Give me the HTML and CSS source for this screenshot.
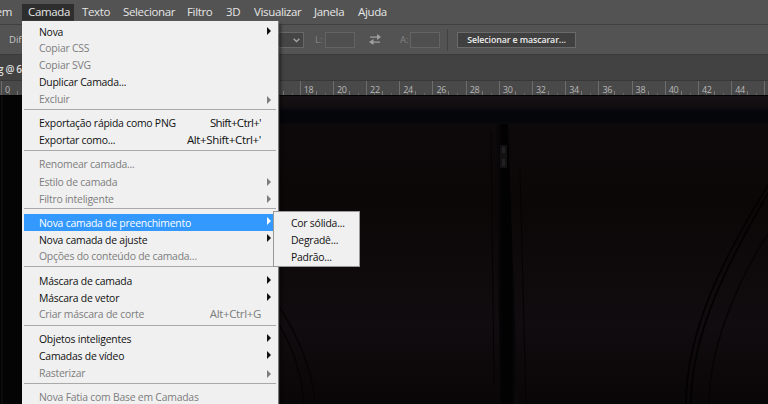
FILE: index.html
```html
<!DOCTYPE html>
<html lang="pt-BR">
<head>
<meta charset="utf-8">
<title>Editor de imagens</title>
<link rel="stylesheet" href="styles.css">
</head>
<body>
<div class="app">
  <nav class="menubar">
    <span class="m-cut">em</span><span class="active">Camada</span><span class="m-texto">Texto</span><span class="m-sel">Selecionar</span><span class="m-filtro">Filtro</span><span class="m-3d">3D</span><span class="m-vis">Visualizar</span><span class="m-jan">Janela</span><span class="m-aj">Ajuda</span>
  </nav>
  <div class="options">
    <span class="opt-label">Dif</span>
    <span class="select"><svg width="7" height="5" viewBox="0 0 7 5"><path d="M.7.8 3.5 3.6 6.3.8" fill="none" stroke="#aaa" stroke-width="1.3"/></svg></span>
    <span class="dim">L:</span><span class="field"></span>
    <svg class="swap" width="12" height="12" viewBox="0 0 12 12"><path d="M1 2.5h7V0l4 3-4 3V3.8H1zM11 7.5H4.5V5L0 8l4.5 3V8.8H11z" fill="#a0a0a0"/></svg>
    <span class="dim">A:</span><span class="field"></span>
    <span class="divider"></span>
    <button>Selecionar e mascarar...</button>
  </div>
  <div class="tabs">g @ 6</div>
  <div class="ruler">
    <span>0</span><span></span><span></span><span></span><span></span><span></span><span></span><span></span><span></span><span>18</span><span>20</span><span>22</span><span>24</span><span>26</span><span>28</span><span>30</span><span>32</span><span>34</span><span>36</span><span>38</span><span>40</span><span>42</span><span>44</span><span></span>
  </div>
  <svg class="canvas" width="768" height="309" viewBox="0 0 768 309">
    <defs>
      <linearGradient id="door" x1="0" y1="0" x2="0" y2="1"><stop offset="0" stop-color="#0e0a0c"/><stop offset=".35" stop-color="#0b0707"/><stop offset=".75" stop-color="#110c0f"/><stop offset="1" stop-color="#090607"/></linearGradient>
      <linearGradient id="rail" x1="0" y1="0" x2="0" y2="1"><stop offset="0" stop-color="#171214"/><stop offset=".4" stop-color="#100d10"/><stop offset=".55" stop-color="#04060a"/><stop offset=".9" stop-color="#05060a"/><stop offset="1" stop-color="#0e0a0c"/></linearGradient>
      <linearGradient id="post"><stop offset="0" stop-color="#0c090b"/><stop offset=".3" stop-color="#020203"/><stop offset=".7" stop-color="#020203"/><stop offset="1" stop-color="#0e0b0d"/></linearGradient>
    </defs>
    <path d="M0 0h768v309H0z" fill="url(#door)"/>
    <path d="M0 0h768v30H0z" fill="url(#rail)"/>
    <path d="M0 0h22v309H0z" fill="#050404"/>
    <path d="M2 0v309" stroke="#171415"/>
    <path d="M496 29h12l10 280h-18z" fill="url(#post)"/>
    <path d="M491 35l3 255M520 75l6 234" fill="none" stroke="#050304"/>
    <path d="M500 50h7v23h-7z" fill="#131213"/><path d="M502 52h3v6h-3zM502 64h3v7h-3z" fill="#222022"/>
    <path d="M768 90C725 160 686 235 686 309M768 98C730 164 691 237 691 309" fill="none" stroke="#030203" stroke-width="1.7"/>
    <path d="M768 139C735 190 709 255 709 309" fill="none" stroke="#060405" stroke-width="1.5"/>
    <path d="M278 210c20 30 34 65 37 99M278 228c16 26 24 52 26 81" fill="none" stroke="#060405" stroke-width="1.5"/>
    <path d="M0 .5h768" stroke="#000"/>
  </svg>

  <div class="menu">
    <div class="item short sub"><span class="label">Nova</span></div>
    <div class="item off"><span class="label">Copiar CSS</span></div>
    <div class="item off"><span class="label">Copiar SVG</span></div>
    <div class="item"><span class="label">Duplicar Camada...</span></div>
    <div class="item off sub"><span class="label">Excluir</span></div>
    <div class="sep s7"></div>
    <div class="item"><span class="label">Exportação rápida como PNG</span><span class="key tight">Shift+Ctrl+'</span></div>
    <div class="item short"><span class="label">Exportar como...</span><span class="key">Alt+Shift+Ctrl+'</span></div>
    <div class="sep s8"></div>
    <div class="item off"><span class="label">Renomear camada...</span></div>
    <div class="item off sub low"><span class="label">Estilo de camada</span></div>
    <div class="item off sub low"><span class="label">Filtro inteligente</span></div>
    <div class="sep s7"></div>
    <div class="item hot sub low"><span class="label">Nova camada de preenchimento</span></div>
    <div class="item sub low"><span class="label">Nova camada de ajuste</span></div>
    <div class="item short off"><span class="label">Opções do conteúdo de camada...</span></div>
    <div class="sep s9"></div>
    <div class="item sub"><span class="label">Máscara de camada</span></div>
    <div class="item short sub"><span class="label">Máscara de vetor</span></div>
    <div class="item off"><span class="label">Criar máscara de corte</span><span class="key">Alt+Ctrl+G</span></div>
    <div class="sep s8"></div>
    <div class="item sub"><span class="label">Objetos inteligentes</span></div>
    <div class="item sub"><span class="label">Camadas de vídeo</span></div>
    <div class="item off sub"><span class="label">Rasterizar</span></div>
    <div class="sep s7"></div>
    <div class="item off"><span class="label">Nova Fatia com Base em Camadas</span></div>
  </div>
  <div class="submenu">
    <div class="label">Cor sólida...</div>
    <div class="label">Degradê...</div>
    <div class="label">Padrão...</div>
  </div>
</div>
</body>
</html>
```
FILE: styles.css
```css
* { box-sizing: border-box; }
body { margin: 0; background: #000; }
.app {
  position: relative;
  width: 768px;
  height: 404px;
  overflow: hidden;
  font: 11.5px/17px "Open Sans", "Noto Sans", sans-serif;
  letter-spacing: -0.35px;
  white-space: nowrap;
}
.menubar {
  display: flex;
  height: 25px;
  background: #535353;
  border-bottom: 1px solid #404040;
  color: #e6e6e6;
  padding-top: 4px;
  line-height: 16px;
}
.m-cut { width: 22px; padding-right: 10px; display: flex; justify-content: flex-end; }
.active { width: 52px; padding-left: 6px; background: #2e2e2e; }
.m-texto { width: 49px; padding-left: 8px; }
.m-sel { width: 64px; }
.m-filtro { width: 39px; }
.m-3d { width: 28px; }
.m-vis { width: 60px; }
.m-jan { width: 44px; }
.options {
  display: flex;
  align-items: center;
  height: 30px;
  background: #535353;
  border-bottom: 1px solid #3a3a3a;
  color: #c8c8c8;
  font-size: 9.5px;
  letter-spacing: 0;
}
.opt-label { width: 190px; padding-left: 9px; }
.select {
  width: 114px;
  height: 16px;
  padding: 5px 3px 0 0;
  border: 1px solid #686868;
  background: #454545;
  display: flex;
  justify-content: flex-end;
}
.dim { width: 21px; padding-left: 11px; color: #828282; }
.field { width: 30px; height: 16px; border: 1px solid #646464; background: #4f4f4f; }
.swap { margin: 0 8px 0 14px; }
.divider { width: 1px; height: 22px; margin: 0 9px 0 7px; background: #424242; }
.options button {
  width: 119px;
  height: 16px;
  padding: 0;
  border: 1px solid #6a6a6a;
  background: #404040;
  color: #eee;
  font: 600 8.8px/14px "Open Sans", sans-serif;
  letter-spacing: -0.1px;
}
.tabs {
  height: 25px;
  padding-top: 6px;
  text-indent: -2px;
  background: #424242;
  color: #ddd;
  font-size: 10px;
  font-weight: 600;
}
.ruler {
  display: flex;
  height: 15px;
  padding-left: 1px;
  border-top: 1px solid #383838;
  background: #494949;
  color: #b8b8b8;
  font-size: 9px;
  line-height: 17px;
  letter-spacing: -0.3px;
}
.ruler span {
  flex: 0 0 33.2px;
  padding-left: 3px;
  border-left: 1px solid #6d6d6d;
  background:
    linear-gradient(#777, #777) 15px 100% / 1px 4px no-repeat,
    linear-gradient(#666, #666) 7px 100% / 1px 2px no-repeat,
    linear-gradient(#666, #666) 24px 100% / 1px 2px no-repeat;
}
.canvas { display: block; }
.menu, .submenu {
  background: #f0f0f0;
  color: #111;
}
.menu {
  position: absolute;
  left: 22px;
  top: 21px;
  width: 256px;
  height: 390px;
  padding: 3px 2px 0 2px;
  box-shadow: 1px 0 1px #777, 3px 3px 3px rgba(0, 0, 0, .5);
}
.item {
  display: flex;
  justify-content: space-between;
  position: relative;
  height: 17px;
  padding: 0 15px;
  line-height: 16px;
}
/* Condensed menu lettering */
.label {
  letter-spacing: -0.25px;
  transform: scaleX(.905);
  transform-origin: 0 0;
}
.tight { letter-spacing: -0.65px; }
.short { height: 16px; }
.low { line-height: 18px; }
.off { color: #7d7d7d; }
.hot { background: #3399ff; color: #fff; }
.sub::after {
  content: "";
  position: absolute;
  right: 5px;
  top: 3px;
  border: 4px solid transparent;
  border-left: 4px solid currentColor;
  border-right: 0;
}
.off.sub::after { top: 5px; }
.sep { background: linear-gradient(#a9a9a9, #a9a9a9) 0 1px / 100% 1px no-repeat; }
.s7 { height: 7px; }
.s8 { height: 8px; background-position-y: 2px; }
.s9 { height: 9px; background-position-y: 2px; }
.submenu {
  position: absolute;
  left: 273px;
  top: 211px;
  width: 87px;
  height: 56px;
  padding: 2px 0 0 17px;
  border: 1px solid #999;
}
```
